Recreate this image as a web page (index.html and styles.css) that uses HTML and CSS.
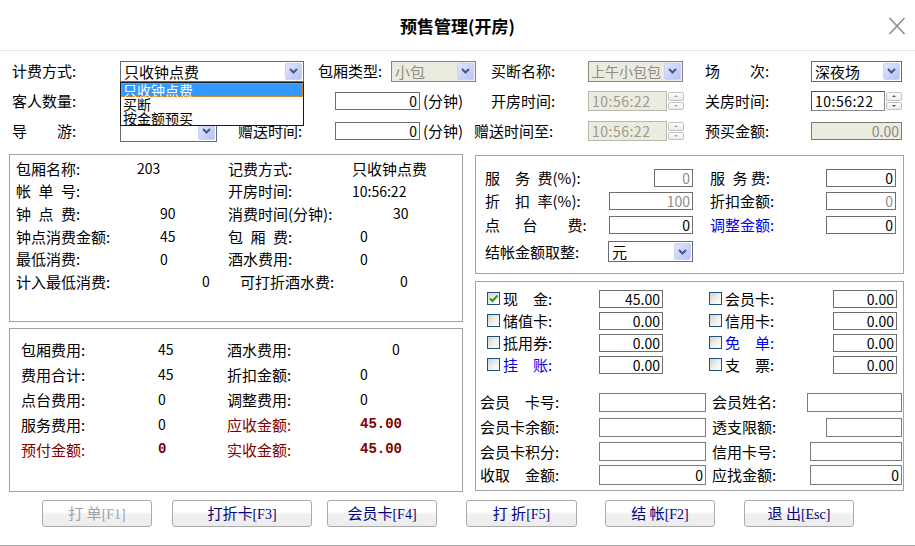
FILE: index.html
```html
<!DOCTYPE html>
<html lang="zh-CN">
<head>
<meta charset="utf-8">
<title>预售管理(开房)</title>
<link rel="stylesheet" href="styles.css">
</head>
<body>
<div class="win">
  <header class="titlebar">
    <h1 class="title">预售管理(开房)</h1>
    <span class="close"><svg width="18" height="18" viewBox="0 0 18 18"><path d="M1.5 1 L16.5 17 M16.5 1 L1.5 17" stroke="#8c8c8c" stroke-width="1.6" fill="none"/></svg></span>
  </header>

  <section class="form">
    <div class="frow">
      <span class="lb w120 pl12">计费方式:</span>
      <div class="sel w184">
        <span class="v">只收钟点费</span><span class="arr"><svg width="9" height="6" viewBox="0 0 9 6"><path d="M1 1 L4.5 4.5 L8 1" fill="none" stroke="#44598a" stroke-width="2"/></svg></span>
        <div class="list"><div class="hi">只收钟点费</div><div>买断</div><div>按金额预买</div></div>
      </div>
      <span class="lb w87 pl14">包厢类型:</span>
      <div class="sel dis w85"><span class="v">小包</span><span class="arr"><svg width="9" height="6" viewBox="0 0 9 6"><path d="M1 1 L4.5 4.5 L8 1" fill="none" stroke="#44598a" stroke-width="2"/></svg></span></div>
      <span class="lb w112 pl15">买断名称:</span>
      <div class="sel dis tight w95"><span class="v">上午小包包</span><span class="arr"><svg width="9" height="6" viewBox="0 0 9 6"><path d="M1 1 L4.5 4.5 L8 1" fill="none" stroke="#44598a" stroke-width="2"/></svg></span></div>
      <span class="lb w128 pl22">场&emsp;&emsp;次:</span>
      <div class="sel w91"><span class="v">深夜场</span><span class="arr"><svg width="9" height="6" viewBox="0 0 9 6"><path d="M1 1 L4.5 4.5 L8 1" fill="none" stroke="#44598a" stroke-width="2"/></svg></span></div>
    </div>

    <div class="frow">
      <span class="lb w120 pl12">客人数量:</span>
      <span class="w215"></span>
      <input class="tb w85" value="0">
      <span class="lb w71 pl3">(分钟)</span>
      <span class="lb w97">开房时间:</span>
      <div class="time dis w96"><span class="tv">10:56:22</span><span class="spin"><i class="up"></i><i class="dn"></i></span></div>
      <span class="lb w127 pl21">关房时间:</span>
      <div class="time w91"><span class="tv">10:56:22</span><span class="spin"><i class="up"></i><i class="dn"></i></span></div>
    </div>

    <div class="frow">
      <span class="lb w120 pl12">导&emsp;&emsp;游:</span>
      <div class="sel w97"><span class="v"></span><span class="arr"><svg width="9" height="6" viewBox="0 0 9 6"><path d="M1 1 L4.5 4.5 L8 1" fill="none" stroke="#44598a" stroke-width="2"/></svg></span></div>
      <span class="lb w118 pl21">赠送时间:</span>
      <input class="tb w85" value="0">
      <span class="lb w54 pl3">(分钟)</span>
      <span class="lb w114">赠送时间至:</span>
      <div class="time dis w96"><span class="tv">10:56:22</span><span class="spin"><i class="up"></i><i class="dn"></i></span></div>
      <span class="lb w127 pl21">预买金额:</span>
      <input class="tb dim w91" value="0.00" disabled>
    </div>
  </section>

  <main class="main">
    <div class="lcol">
      <div class="panel info1">
        <span>包厢名称:</span><span class="n">203</span><span>记费方式:</span><span>只收钟点费</span>
        <span>帐&ensp;单&ensp;号:</span><span></span><span>开房时间:</span><span class="n">10:56:22</span>
        <span>钟&ensp;点&ensp;费:</span><span class="n i23">90</span><span>消费时间(分钟):</span><span class="n i41">30</span>
        <span>钟点消费金额:</span><span class="n i23">45</span><span>包&ensp;厢&ensp;费:</span><span class="n i8">0</span>
        <span>最低消费:</span><span class="n i23">0</span><span>酒水费用:</span><span class="n i8">0</span>
        <span>计入最低消费:</span><span class="n i65">0</span><span class="i12">可打折酒水费:</span><span class="n i48">0</span>
      </div>
      <div class="panel info2">
        <span>包厢费用:</span><span class="n">45</span><span>酒水费用:</span><span class="n i32">0</span>
        <span>费用合计:</span><span class="n">45</span><span>折扣金额:</span><span class="n">0</span>
        <span>点台费用:</span><span class="n">0</span><span>调整费用:</span><span class="n">0</span>
        <span>服务费用:</span><span class="n">0</span><span class="red">应收金额:</span><span class="bn">45.00</span>
        <span class="red">预付金额:</span><span class="bn">0</span><span class="red">实收金额:</span><span class="bn">45.00</span>
      </div>
    </div>

    <div class="rcol">
      <div class="panel fees">
        <div class="cell"><span class="lb">服&emsp;务&ensp;费(%):</span><input class="tb gray w39" value="0" disabled></div>
        <div class="cell"><span class="lb">服&ensp;务&nbsp;费:</span><input class="tb w70" value="0"></div>
        <div class="cell"><span class="lb">折&emsp;扣&ensp;率(%):</span><input class="tb gray w84" value="100" disabled></div>
        <div class="cell"><span class="lb">折扣金额:</span><input class="tb gray w70" value="0" disabled></div>
        <div class="cell"><span class="lb">点&emsp;&ensp;台&emsp;&emsp;费:</span><input class="tb w84" value="0"></div>
        <div class="cell"><span class="lb blue">调整金额:</span><input class="tb w70" value="0"></div>
        <div class="cell"><span class="lb">结帐金额取整:</span><div class="sel w85"><span class="v">元</span><span class="arr"><svg width="9" height="6" viewBox="0 0 9 6"><path d="M1 1 L4.5 4.5 L8 1" fill="none" stroke="#44598a" stroke-width="2"/></svg></span></div></div>
        <div class="cell"></div>
      </div>

      <div class="panel pay">
        <div class="cbgrid">
          <div class="cell"><span class="cb"><svg width="11" height="11" viewBox="0 0 11 11"><path d="M2 5.5 L4.5 8 L9.5 2.5" fill="none" stroke="#22a022" stroke-width="2"/></svg></span><span class="lb ml3">现&emsp;金:</span><input class="tb w64" value="45.00"></div>
          <div class="cell"><span class="cb"></span><span class="lb ml3">会员卡:</span><input class="tb w64" value="0.00"></div>
          <div class="cell"><span class="cb"></span><span class="lb ml3">储值卡:</span><input class="tb w64" value="0.00"></div>
          <div class="cell"><span class="cb"></span><span class="lb ml3">信用卡:</span><input class="tb w64" value="0.00"></div>
          <div class="cell"><span class="cb"></span><span class="lb ml3">抵用券:</span><input class="tb w64" value="0.00"></div>
          <div class="cell"><span class="cb"></span><span class="lb ml3 blue">免&emsp;单:</span><input class="tb w64" value="0.00"></div>
          <div class="cell"><span class="cb"></span><span class="lb ml3 blue">挂&emsp;账:</span><input class="tb w64" value="0.00"></div>
          <div class="cell"><span class="cb"></span><span class="lb ml3">支&emsp;票:</span><input class="tb w64" value="0.00"></div>
        </div>
        <div class="mgrid">
          <div class="cell"><span class="lb">会员&emsp;卡号:</span><input class="tb mt w107"></div>
          <div class="cell"><span class="lb">会员姓名:</span><input class="tb mt w95"></div>
          <div class="cell"><span class="lb">会员卡余额:</span><input class="tb mt w107"></div>
          <div class="cell"><span class="lb">透支限额:</span><input class="tb mt w76"></div>
          <div class="cell"><span class="lb">会员卡积分:</span><input class="tb mt w107 mr-1"></div>
          <div class="cell"><span class="lb">信用卡号:</span><input class="tb mt w92 mr2"></div>
          <div class="cell"><span class="lb">收取&emsp;金额:</span><input class="tb mt h20 w107 mr-1" value="0"></div>
          <div class="cell"><span class="lb">应找金额:</span><input class="tb mt h20 w92 mr2" value="0"></div>
        </div>
      </div>
    </div>
  </main>

  <footer class="btns">
    <button class="btn b110 off">打&nbsp;单<span class="k">[F1]</span></button>
    <button class="btn b140 m20">打折卡<span class="k">[F3]</span></button>
    <button class="btn b110 m15">会员卡<span class="k">[F4]</span></button>
    <button class="btn b111 m29">打&nbsp;折<span class="k">[F5]</span></button>
    <button class="btn b110 m28">结&nbsp;帐<span class="k">[F2]</span></button>
    <button class="btn b110 m29">退&nbsp;出<span class="k">[Esc]</span></button>
  </footer>
</div>
</body>
</html>
```

FILE: styles.css
```css
* { box-sizing: border-box; }
html, body { margin: 0; padding: 0; }
body {
  background: #fff;
  font-family: "Noto Sans CJK SC", "Noto Sans", sans-serif;
  font-size: 15px;
  color: #000;
  width: 915px;
  height: 546px;
  overflow: hidden;
}
.win {
  height: 546px;
  border-bottom: 1px solid #a6a6a6;
  display: flex;
  flex-direction: column;
}

/* title bar */
.titlebar {
  height: 51px;
  flex: none;
  border-bottom: 1px solid #e6e6e6;
  display: grid;
  grid-template-columns: 1fr auto 1fr;
  align-items: center;
  padding-top: 2px;
}
.title {
  grid-column: 2;
  margin: 0;
  font-size: 17px;
  font-weight: bold;
  line-height: 20px;
}
.close {
  grid-column: 3;
  justify-self: end;
  margin-right: 9px;
  width: 18px;
  height: 18px;
  display: flex;
}

/* top form */
.form { padding-top: 5px; flex: none; }
.frow { display: flex; align-items: center; height: 30px; }
.lb { white-space: nowrap; line-height: 20px; flex: none; }

.w39 { width: 39px; } .w54 { width: 54px; } .w64 { width: 64px; } .w70 { width: 70px; }
.w71 { width: 71px; } .w76 { width: 76px; } .w84 { width: 84px; } .w85 { width: 85px; }
.w87 { width: 87px; } .w91 { width: 91px; } .w92 { width: 92px; } .w95 { width: 95px; }
.w96 { width: 96px; } .w97 { width: 97px; } .w107 { width: 107px; } .w112 { width: 112px; }
.w114 { width: 114px; } .w118 { width: 118px; } .w120 { width: 120px; } .w127 { width: 127px; }
.w128 { width: 128px; } .w184 { width: 184px; } .w215 { width: 215px; flex: none; }
.pl3 { padding-left: 3px; } .pl12 { padding-left: 12px; } .pl14 { padding-left: 14px; }
.pl15 { padding-left: 15px; } .pl21 { padding-left: 21px; } .pl22 { padding-left: 22px; }
.ml3 { margin-left: 3px; }
.mr2 { margin-right: 2px; } .mr-1 { margin-right: -1px; }

/* select */
.sel {
  position: relative;
  flex: none;
  display: flex;
  align-items: center;
  height: 21px;
  border: 1px solid #6b6b6b;
  background: #fff;
  padding: 0 1px 0 3px;
  line-height: 19px;
}
.sel .v { flex: 1; overflow: hidden; white-space: nowrap; min-width: 0; }
.sel.tight { padding-left: 2px; }
.sel.tight .v { font-size: 14px; }
.arr {
  flex: none;
  width: 17px;
  height: 17px;
  border: 1px solid #c9d3f7;
  border-radius: 2px;
  background: linear-gradient(135deg, #e2e6fd 0%, #c9d2f9 55%, #b5c4f4 100%);
  display: flex;
  align-items: center;
  justify-content: center;
}
.sel.dis { background: #ecebe0; color: #8e8e82; border-color: #858579; }
.list {
  position: absolute;
  left: -1px;
  top: 20px;
  width: 184px;
  border: 1px solid #1a1a1a;
  background: #fff;
  z-index: 5;
  font-size: 14px;
  line-height: 14px;
  color: #000;
}
.list div { height: 14px; padding-left: 2px; white-space: nowrap; }
.list .hi { background: #3399ff; color: #fff; outline: 1px dotted #e0953a; outline-offset: -1px; }

/* text box */
.tb {
  flex: none;
  height: 18px;
  margin: 0;
  border: 1px solid #6f6f6f;
  background: #fff;
  font-family: "Noto Sans CJK SC", "Noto Sans", sans-serif;
  font-size: 14px;
  color: #000;
  text-align: right;
  padding: 0 2px;
  outline: none;
}
.tb.gray { color: #8c8c8c; background: #fff; }
.tb.dim { background: #ecebe0; color: #8c8c82; border-color: #7b7b72; }
.tb.mt { height: 19px; border-color: #7c7c7c; }
.tb.h20 { height: 20px; }

/* time box */
.time { flex: none; display: flex; height: 20px; }
.tv {
  flex: 1;
  border: 1px solid #8a8a8a;
  border-top-color: #4f4f4f;
  border-left-color: #4f4f4f;
  background: #fff;
  padding-left: 3px;
  line-height: 18px;
  font-size: 14px;
  letter-spacing: 0.5px;
}
.time.dis .tv { background: #ecebe0; color: #9a9a8e; border-color: #b8b8ae; }
.spin {
  flex: none;
  width: 17px;
  display: flex;
  flex-direction: column;
  gap: 1px;
  padding: 1px 0 1px 1px;
}
.spin i {
  flex: 1;
  position: relative;
  border: 1px solid #c2c2c2;
  border-radius: 2px;
  background: linear-gradient(#fdfdfd, #ececec);
}
.spin i::after {
  content: "";
  position: absolute;
  left: 50%;
  top: 50%;
  margin: -1px 0 0 -2px;
  border-left: 2px solid transparent;
  border-right: 2px solid transparent;
}
.spin i.up::after { border-bottom: 2px solid #555; }
.spin i.dn::after { border-top: 2px solid #555; }
.time.dis .spin i::after { opacity: 0.5; }

/* main area */
.main {
  flex: none;
  display: flex;
  gap: 12px;
  padding-left: 9px;
  margin-top: 8px;
}
.lcol { width: 454px; display: flex; flex-direction: column; gap: 6px; }
.rcol { width: 429px; display: flex; flex-direction: column; gap: 7px; margin-top: 1px; }
.panel { border: 1px solid #a4a4a4; }

.info1 {
  height: 168px;
  padding: 2px 0 0 6px;
  display: grid;
  grid-template-columns: 121px 91px 124px 1fr;
  grid-auto-rows: 22.6px;
  align-items: center;
  align-content: start;
  white-space: nowrap;
}
.info2 {
  height: 164px;
  padding: 7.5px 0 0 11px;
  display: grid;
  grid-template-columns: 137px 69px 133px 1fr;
  grid-auto-rows: 25px;
  align-items: center;
  align-content: start;
  white-space: nowrap;
}
.n { font-size: 14px; }
.i8 { padding-left: 8px; } .i12 { padding-left: 12px; } .i23 { padding-left: 23px; }
.i32 { padding-left: 32px; } .i41 { padding-left: 41px; } .i48 { padding-left: 48px; }
.i65 { padding-left: 65px; }
.red { color: #800000; }
.blue { color: #0000ee; }
.bn {
  font-family: "Liberation Mono", monospace;
  font-weight: bold;
  font-size: 14px;
  color: #800000;
}

.fees {
  height: 119px;
  padding: 10px 0 0 9px;
  display: grid;
  grid-template-columns: 208px 186px;
  column-gap: 17px;
  grid-template-rows: 23px 24px 24px 29px;
  align-items: center;
}
.cell { display: flex; align-items: center; }
.cell .lb { flex: 1; }

.pay { height: 210px; padding-top: 5.5px; }
.cbgrid {
  padding-left: 11px;
  display: grid;
  grid-template-columns: 176px 188px;
  column-gap: 46px;
  grid-auto-rows: 22px;
  align-items: center;
}
.cb {
  flex: none;
  width: 13px;
  height: 13px;
  border: 1px solid #1c5180;
  background: linear-gradient(135deg, #d2d2cc 0%, #efefec 55%, #ffffff 100%);
  display: flex;
  align-items: center;
  justify-content: center;
}
.mgrid {
  margin-top: 14px;
  padding-left: 4px;
  display: grid;
  grid-template-columns: 226px 190px;
  column-gap: 6px;
  grid-template-rows: 25px 25px 24px 22px;
  align-items: center;
}

/* buttons */
.btns {
  flex: none;
  display: flex;
  margin-top: 8px;
  padding-left: 42px;
  height: 27px;
}
.btn {
  height: 27px;
  margin: 0;
  padding: 0;
  border: 1px solid #aaaaaa;
  border-radius: 3px;
  background: linear-gradient(#ffffff 0%, #ffffff 42%, #f1f1f1 52%, #ececec 100%);
  color: #000080;
  font-family: "Noto Sans CJK SC", "Noto Sans", sans-serif;
  font-size: 15px;
  line-height: 20px;
  white-space: nowrap;
}
.btn .k { font-family: "Liberation Serif", serif; font-size: 14px; }
.btn.off { color: #a0a0a0; }
.b110 { width: 110px; } .b111 { width: 111px; } .b140 { width: 140px; }
.m15 { margin-left: 15px; } .m20 { margin-left: 20px; } .m28 { margin-left: 28px; } .m29 { margin-left: 29px; }
```
